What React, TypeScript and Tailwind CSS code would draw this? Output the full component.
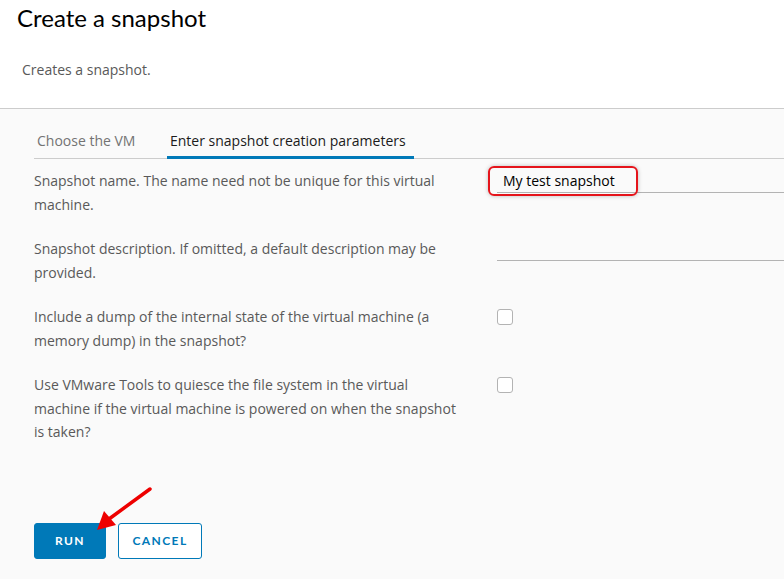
import React from "react";

const font = { fontFamily: "'Open Sans', Lato, sans-serif" };
const titleFont = { fontFamily: "Lato, 'Open Sans', sans-serif" };

function Label({ lines }: { lines: string[] }) {
  return (
    <div className="w-[463px] shrink-0 pr-4 text-[14px] leading-[23.5px] text-[#595959]">
      {lines.map((l, i) => (
        <div key={i} className="whitespace-nowrap">
          {l}
        </div>
      ))}
    </div>
  );
}

function Checkbox() {
  return (
    <div className="mt-[4px] h-[16px] w-[16px] rounded-[3px] border border-[#b3b3b3] bg-white" />
  );
}

export default function App() {
  return (
    <div className="flex h-[579px] w-[784px] flex-col overflow-hidden bg-[#fafafa]" style={font}>
      <div className="h-[109px] shrink-0 border-b border-[#cccccc] bg-white pl-[17px]">
        <h1 className="pt-[2px] text-[24px] font-normal leading-[32px] text-[#000000]" style={titleFont}>
          Create a snapshot
        </h1>
        <p className="mt-[26px] pl-[5px] text-[14px] leading-[20px] text-[#595959]">
          Creates a snapshot.
        </p>
      </div>

      <div className="flex flex-1 flex-col pl-[34px] pt-[14px]">
        <div className="flex h-[36px] border-b border-[#cccccc]">
          <div className="w-[133px] px-[3px] pt-[7px] text-[14px] text-[#737373]">Choose the VM</div>
          <div className="-mb-px w-[247px] border-b-[3px] border-[#0079b8] px-[3px] pt-[7px] text-[14px] text-[#1b1b1b]">
            Enter snapshot creation parameters
          </div>
        </div>

        <div className="mt-[10px] flex flex-col gap-[21px]">
          <div className="flex">
            <Label lines={["Snapshot name. The name need not be unique for this virtual", "machine."]} />
            <div className="relative h-[24px] flex-1 border-b border-[#b3b3b3]">
              <div className="pl-[6px] text-[14px] leading-[24px] text-[#000000]">My test snapshot</div>
              <div className="pointer-events-none absolute left-[-9px] top-[-3px] h-[30px] w-[150px] rounded-[6px] border-2 border-[#e5141b] shadow-[0_0_4px_rgba(0,0,0,0.25)]" />
            </div>
          </div>
          <div className="flex">
            <Label lines={["Snapshot description. If omitted, a default description may be", "provided."]} />
            <div className="h-[24px] flex-1 border-b border-[#b3b3b3]" />
          </div>
          <div className="flex">
            <Label lines={["Include a dump of the internal state of the virtual machine (a", "memory dump) in the snapshot?"]} />
            <Checkbox />
          </div>
          <div className="flex">
            <Label
              lines={[
                "Use VMware Tools to quiesce the file system in the virtual",
                "machine if the virtual machine is powered on when the snapshot",
                "is taken?",
              ]}
            />
            <Checkbox />
          </div>
        </div>

        <div className="relative mt-[79px] flex gap-[12px]" style={titleFont}>
          <button className="h-[36px] w-[72px] rounded-[3px] border border-[#0079b8] bg-[#0079b8] text-[12px] font-bold tracking-[0.12em] text-white">
            RUN
          </button>
          <button className="h-[36px] w-[84px] rounded-[3px] border border-[#0079b8] bg-white text-[12px] font-bold tracking-[0.12em] text-[#0079b8]">
            CANCEL
          </button>
          <svg className="pointer-events-none absolute left-[55px] top-[-36px]" width="70" height="50" viewBox="0 0 70 50">
            <line x1="61" y1="2" x2="20" y2="32" stroke="#ee0000" strokeWidth="3.5" strokeLinecap="round" />
            <polygon points="8,43 15,24 27,38" fill="#ee0000" />
          </svg>
        </div>
      </div>
    </div>
  );
}
